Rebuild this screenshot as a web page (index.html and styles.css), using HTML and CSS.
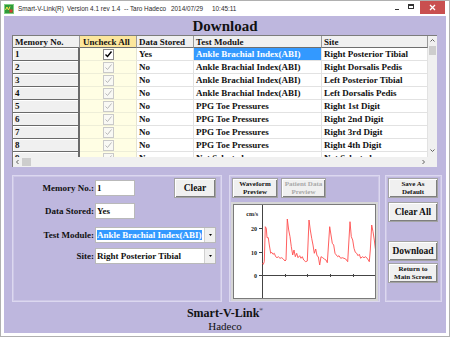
FILE: index.html
```html
<!DOCTYPE html>
<html>
<head>
<meta charset="utf-8">
<link rel="stylesheet" href="styles.css">
</head>
<body>
<div class="window">
  <div class="titlebar">
    <svg class="appicon" viewBox="0 0 10 10" width="10" height="10">
      <rect x="0" y="0" width="10" height="10" fill="#2f9a3a"/>
      <rect x="0.5" y="0.5" width="9" height="9" fill="none" stroke="#7fd07f" stroke-width="1"/>
      <polyline points="1.5,6 3,3 4.5,6 6,2.5" fill="none" stroke="#ffe04a" stroke-width="1"/>
      <rect x="5.5" y="5.5" width="3" height="3" fill="#d83b2e"/>
    </svg>
    <span class="tt t1">Smart-V-Link(R)</span>
    <span class="tt t2">Version 4.1 rev 1.4</span>
    <span class="tt t3">-- Taro Hadeco</span>
    <span class="tt t4">2014/07/29</span>
    <span class="tt t5">10:45:11</span>
    <div class="controls">
      <div class="ctl"><svg width="14" height="13" viewBox="0 0 14 13"><line x1="5" y1="8.5" x2="9" y2="8.5" stroke="#333" stroke-width="1"/></svg></div>
      <div class="ctl"><svg width="14" height="13" viewBox="0 0 14 13"><rect x="4.5" y="3.5" width="5" height="4" fill="none" stroke="#333" stroke-width="1"/><line x1="4.5" y1="4.5" x2="9.5" y2="4.5" stroke="#333"/></svg></div>
      <div class="ctl close"><svg width="25" height="13" viewBox="0 0 25 13"><path d="M10 4 L15 9 M15 4 L10 9" stroke="#fff" stroke-width="1.3"/></svg></div>
    </div>
  </div>

  <div class="client">
    <h1 class="heading">Download</h1>

    <div class="gridview">
      <div class="grid-main">
        <div class="table-wrap">
          <div class="row head">
            <div class="c hc">Memory No.</div>
            <div class="c hc hy">Uncheck All</div>
            <div class="c hc">Data Stored</div>
            <div class="c hc">Test Module</div>
            <div class="c hc">Site</div>
          </div>
          <div class="row">
            <div class="c rh">1</div>
            <div class="c uc"><span class="cb on"><svg viewBox="0 0 9 9" width="9" height="9"><polyline points="1.5,4.5 3.5,6.5 7.5,1.5" fill="none" stroke="#000" stroke-width="1.4"/></svg></span></div>
            <div class="c dc">Yes</div>
            <div class="c dc sel">Ankle Brachial Index(ABI)</div>
            <div class="c dc">Right Posterior Tibial</div>
          </div>
          <div class="row">
            <div class="c rh">2</div>
            <div class="c uc"><span class="cb"><svg viewBox="0 0 9 9" width="9" height="9"><polyline points="1.5,4.5 3.5,6.5 7.5,1.5" fill="none" stroke="#b8b8b8" stroke-width="1"/></svg></span></div>
            <div class="c dc">No</div>
            <div class="c dc">Ankle Brachial Index(ABI)</div>
            <div class="c dc">Right Dorsalis Pedis</div>
          </div>
          <div class="row">
            <div class="c rh">3</div>
            <div class="c uc"><span class="cb"><svg viewBox="0 0 9 9" width="9" height="9"><polyline points="1.5,4.5 3.5,6.5 7.5,1.5" fill="none" stroke="#b8b8b8" stroke-width="1"/></svg></span></div>
            <div class="c dc">No</div>
            <div class="c dc">Ankle Brachial Index(ABI)</div>
            <div class="c dc">Left Posterior Tibial</div>
          </div>
          <div class="row">
            <div class="c rh">4</div>
            <div class="c uc"><span class="cb"><svg viewBox="0 0 9 9" width="9" height="9"><polyline points="1.5,4.5 3.5,6.5 7.5,1.5" fill="none" stroke="#b8b8b8" stroke-width="1"/></svg></span></div>
            <div class="c dc">No</div>
            <div class="c dc">Ankle Brachial Index(ABI)</div>
            <div class="c dc">Left Dorsalis Pedis</div>
          </div>
          <div class="row">
            <div class="c rh">5</div>
            <div class="c uc"><span class="cb"><svg viewBox="0 0 9 9" width="9" height="9"><polyline points="1.5,4.5 3.5,6.5 7.5,1.5" fill="none" stroke="#b8b8b8" stroke-width="1"/></svg></span></div>
            <div class="c dc">No</div>
            <div class="c dc">PPG Toe Pressures</div>
            <div class="c dc">Right 1st Digit</div>
          </div>
          <div class="row">
            <div class="c rh">6</div>
            <div class="c uc"><span class="cb"><svg viewBox="0 0 9 9" width="9" height="9"><polyline points="1.5,4.5 3.5,6.5 7.5,1.5" fill="none" stroke="#b8b8b8" stroke-width="1"/></svg></span></div>
            <div class="c dc">No</div>
            <div class="c dc">PPG Toe Pressures</div>
            <div class="c dc">Right 2nd Digit</div>
          </div>
          <div class="row">
            <div class="c rh">7</div>
            <div class="c uc"><span class="cb"><svg viewBox="0 0 9 9" width="9" height="9"><polyline points="1.5,4.5 3.5,6.5 7.5,1.5" fill="none" stroke="#b8b8b8" stroke-width="1"/></svg></span></div>
            <div class="c dc">No</div>
            <div class="c dc">PPG Toe Pressures</div>
            <div class="c dc">Right 3rd Digit</div>
          </div>
          <div class="row">
            <div class="c rh">8</div>
            <div class="c uc"><span class="cb"><svg viewBox="0 0 9 9" width="9" height="9"><polyline points="1.5,4.5 3.5,6.5 7.5,1.5" fill="none" stroke="#b8b8b8" stroke-width="1"/></svg></span></div>
            <div class="c dc">No</div>
            <div class="c dc">PPG Toe Pressures</div>
            <div class="c dc">Right 4th Digit</div>
          </div>
          <div class="row">
            <div class="c rh">9</div>
            <div class="c uc"><span class="cb"><svg viewBox="0 0 9 9" width="9" height="9"><polyline points="1.5,4.5 3.5,6.5 7.5,1.5" fill="none" stroke="#b8b8b8" stroke-width="1"/></svg></span></div>
            <div class="c dc">No</div>
            <div class="c dc">Not Selected</div>
            <div class="c dc">Not Selected</div>
          </div>
        </div>
        <div class="hscroll">
          <div class="arr"><svg width="9" height="10" viewBox="0 0 9 10"><polyline points="5.5,3 3.5,5 5.5,7" fill="none" stroke="#606060" stroke-width="1"/></svg></div>
          <div class="hthumb"></div>
          <div class="sp"></div>
          <div class="arr"><svg width="9" height="10" viewBox="0 0 9 10"><polyline points="3.5,3 5.5,5 3.5,7" fill="none" stroke="#606060" stroke-width="1"/></svg></div>
        </div>
      </div>
      <div class="vscroll">
        <div class="varr"><svg width="9" height="9" viewBox="0 0 9 9"><polyline points="2.5,5.5 4.5,3.5 6.5,5.5" fill="none" stroke="#606060" stroke-width="1"/></svg></div>
        <div class="vthumb"></div>
        <div class="sp"></div>
        <div class="varr"><svg width="9" height="9" viewBox="0 0 9 9"><polyline points="2.5,3.5 4.5,5.5 6.5,3.5" fill="none" stroke="#606060" stroke-width="1"/></svg></div>
        <div class="corner"></div>
      </div>
    </div>

    <div class="panels">
      <div class="panel left">
        <div class="frow r1">
          <span class="lbl">Memory No.:</span>
          <span class="field f-short">1</span>
          <button class="btn b-clear">Clear</button>
        </div>
        <div class="frow r2">
          <span class="lbl">Data Stored:</span>
          <span class="field f-short">Yes</span>
        </div>
        <div class="frow r3">
          <span class="lbl">Test Module:</span>
          <span class="field combo"><span class="ctext"><span class="hl">Ankle Brachial Index(ABI)</span></span><span class="cbtn"><svg width="9" height="14" viewBox="0 0 9 14"><path d="M3 6 L6 6 L4.5 8 Z" fill="#000"/></svg></span></span>
        </div>
        <div class="frow r4">
          <span class="lbl">Site:</span>
          <span class="field combo"><span class="ctext">Right Posterior Tibial</span><span class="cbtn"><svg width="9" height="14" viewBox="0 0 9 14"><path d="M3 6 L6 6 L4.5 8 Z" fill="#000"/></svg></span></span>
        </div>
      </div>

      <div class="panel mid">
        <div class="btnrow">
          <button class="btn small w46">Waveform<br>Preview</button>
          <button class="btn small w45 dis">Patient Data<br>Preview</button>
        </div>
        <div class="chart">
          <div class="chart-in">
            <svg width="141" height="93" viewBox="-1 0 141 93">
              <line x1="27.5" y1="0" x2="27.5" y2="93" stroke="#444" stroke-width="1"/>
              <line x1="27" y1="70.5" x2="141" y2="70.5" stroke="#444" stroke-width="1"/>
              <line x1="24" y1="23.5" x2="27" y2="23.5" stroke="#444"/>
              <line x1="24" y1="47.5" x2="27" y2="47.5" stroke="#444"/>
              <line x1="24" y1="70.5" x2="27" y2="70.5" stroke="#444"/>
              <line x1="50.5" y1="69" x2="50.5" y2="72" stroke="#444"/>
              <line x1="72.5" y1="69" x2="72.5" y2="72" stroke="#444"/>
              <line x1="95.5" y1="69" x2="95.5" y2="72" stroke="#444"/>
              <line x1="118.5" y1="69" x2="118.5" y2="72" stroke="#444"/>
              <text x="23" y="11" class="ax" text-anchor="end">cm/s</text>
              <text x="22" y="25.5" class="ax" text-anchor="end">20</text>
              <text x="22" y="49.5" class="ax" text-anchor="end">10</text>
              <text x="22" y="72.5" class="ax" text-anchor="end">0</text>
              <polyline fill="none" stroke="#ff4d4d" stroke-width="0.9" stroke-linejoin="round" points="27.3,58.3 28.3,59.3 29.3,56.7 30.3,21.7 31.3,23.3 32,32.7 33.3,32.7 34.3,40 35.7,48.3 36.7,47.3 38,49.3 39.3,48.3 40.7,51.7 42,52.7 43.3,51.7 45,53.3 46.7,52.7 48.3,54 50,56 51,55 52.3,14 53.7,25 55,31.7 56.3,41.7 57.7,50 59,45 60.3,51.7 61.7,48.3 63,52.7 64.7,50.7 66,53.3 67.3,51.7 68.7,55 70.7,56.7 72.3,56 74,15 75.3,25 76.7,33.3 78,40 79.3,48.3 80.7,44 82,50.7 83.3,51.7 84.7,60 86,51.7 87.7,52.7 89.3,54 91,55 92.3,57.7 94.7,21.7 96,30 97.3,38.3 98.7,40 100,48.3 101.3,50 102.7,51.7 104,50.7 105.7,53.3 107.3,52.7 109,53.3 110.7,54 112.7,56.7 115,16.7 116.3,31.7 117.7,35 119,43.3 120.3,47.3 121.7,48.3 123,50.7 124.3,49.3 125.7,53.3 127.3,51.7 129,52.7 130.7,51.7 132.7,54 134.3,56.7 135.3,45 136.7,20 138,26.7 139.3,35 140.3,43.3 141,41.7"/>
            </svg>
          </div>
        </div>
      </div>

      <div class="panel right">
        <button class="btn small w50">Save As<br>Default</button>
        <button class="btn w50 big mt4">Clear All</button>
        <button class="btn w50 big mt19">Download</button>
        <button class="btn small w50 mt2">Return to<br>Main Screen</button>
      </div>
    </div>

    <div class="footer">
      <div class="brand">Smart-V-Link<sup>®</sup></div>
      <div class="company">Hadeco</div>
    </div>
  </div>
</div>
</body>
</html>
```

FILE: styles.css
```css
* { box-sizing: border-box; }
html, body { margin: 0; padding: 0; }
body {
  width: 450px;
  height: 337px;
  overflow: hidden;
  background: #fff;
  font-family: "Liberation Serif", "Times New Roman", serif;
  color: #111;
}

.window {
  width: 450px;
  height: 337px;
  border: 1px solid #b0b0b0;
  background: #fff;
  display: flex;
  flex-direction: column;
}

/* title bar */
.titlebar {
  height: 15px;
  flex: none;
  display: flex;
  align-items: center;
  font-family: "Liberation Sans", Arial, sans-serif;
  font-size: 6.4px;
  color: #2a2a2a;
  white-space: nowrap;
}
.appicon { margin: 0 4px 0 3px; flex: none; }
.tt { display: inline-block; }
.t1 { width: 49px; }
.t2 { width: 57px; }
.t3 { width: 47px; }
.t4 { width: 41px; }
.t5 { width: 30px; }
.controls {
  margin-left: auto;
  margin-right: 4px;
  display: flex;
  align-self: flex-start;
}
.ctl { width: 14px; height: 13px; }
.ctl svg { display: block; }
.ctl.close { width: 25px; margin-left: 2px; background: #c94f4f; }

/* client area */
.client {
  flex: 1;
  margin: 0 3px 3px;
  background: #beb7de;
  display: flex;
  flex-direction: column;
}
.heading {
  margin: 0;
  height: 19px;
  line-height: 20px;
  text-align: center;
  font-size: 15px;
  font-weight: bold;
  color: #111;
}

/* grid */
.gridview {
  margin: 0 9px 0 8px;
  height: 132px;
  display: flex;
  border-top: 1px solid #7c7c7c;
  border-left: 1px solid #7c7c7c;
  background: #fff;
}
.grid-main { width: 415px; display: flex; flex-direction: column; }
.table-wrap { height: 121px; overflow: hidden; background: #fff; }
.row {
  display: grid;
  grid-template-columns: 67px 57px 57px 128px 106px;
  height: 13px;
}
.row.head { height: 12px; }
.c {
  display: flex;
  align-items: center;
  overflow: hidden;
  white-space: nowrap;
  font-size: 9px;
  font-weight: bold;
  padding-left: 2px;
}
.hc {
  background: #f0f0f0;
  border-right: 1px solid #9a9a9a;
  border-bottom: 1px solid #6e6e6e;
  padding-left: 2px;
}
.hc.hy { background: #fce69c; padding-left: 3px; }
.rh {
  background: #f0f0f0;
  border-right: 2px solid #6a6a6a;
  border-bottom: 1px solid #6a6a6a;
  box-shadow: inset 1px 1px 0 #ffffff;
}
.uc {
  background: #fffee4;
  border-bottom: 1px solid #eeeed8;
  border-right: 1px solid #e4e4d4;
  padding-left: 23px;
}
.cb {
  width: 11px;
  height: 11px;
  border: 1px solid #c9c9c9;
  background: #f9f9f4;
  display: flex;
  align-items: center;
  justify-content: center;
}
.cb svg { display: block; }
.cb.on { border-color: #8a8a8a; background: #fff; }
.dc {
  background: #fff;
  border-right: 1px solid #e2e2e2;
  border-bottom: 1px solid #e2e2e2;
}
.dc.sel { background: #3399ff; color: #fff; }

.hscroll {
  height: 10px;
  display: flex;
  background: #f0f0f0;
}
.arr { width: 9px; height: 10px; }
.arr svg, .varr svg { display: block; }
.hthumb { width: 9px; height: 8px; margin-top: 1px; background: #cdcdcd; }
.sp { flex: 1; }
.vscroll {
  width: 9px;
  display: flex;
  flex-direction: column;
  background: #f0f0f0;
}
.varr { height: 9px; }
.vthumb { height: 9px; margin: 1px 1px 0; background: #cdcdcd; }
.corner { height: 10px; background: #f0f0f0; margin-top: 2px; }

/* panels */
.panels {
  display: flex;
  margin: 8px 4px 0 8px;
  height: 127px;
}
.panel {
  border: 1px solid #dcd8f0;
  box-shadow: inset 0 0 0 1px #cdc7e6;
}
.left { width: 210px; padding: 2px 5px 0 0; }
.mid { width: 151px; margin-left: 7px; padding: 2px 0 0 2px; }
.right {
  width: 57px;
  margin-left: 5px;
  padding: 2px 0 0 2px;
  display: flex;
  flex-direction: column;
  align-items: flex-start;
}

.frow { display: flex; align-items: center; }
.r1 { height: 20px; }
.r2 { margin-top: 5px; }
.r3 { margin-top: 8px; }
.r4 { margin-top: 5px; }
.lbl {
  width: 81px;
  text-align: right;
  font-size: 9px;
  font-weight: bold;
}
.field {
  margin-left: 1px;
  height: 16px;
  background: #fff;
  border: 1px solid #b9b9b9;
  font-size: 9px;
  font-weight: bold;
  display: flex;
  align-items: center;
  padding-left: 1px;
  white-space: nowrap;
  overflow: hidden;
}
.f-short { width: 40px; }
.combo { width: 121px; padding: 0; }
.ctext { flex: 1; padding-left: 1px; overflow: hidden; }
.hl { background: #3399ff; color: #fff; padding: 1px 0; }
.cbtn {
  width: 11px;
  height: 14px;
  background: #f0f0f0;
  border-left: 1px solid #d0d0d0;
  display: flex;
  justify-content: center;
}
.cbtn svg { display: block; }

.btn {
  font-family: "Liberation Serif", "Times New Roman", serif;
  font-weight: bold;
  font-size: 9px;
  color: #111;
  background: #f0f0f0;
  border: 1px solid #a3a3a3;
  box-shadow: inset 1px 1px 0 #ffffff, inset -1px -1px 0 #7e7e7e;
  padding: 0;
  height: 20px;
  line-height: 8px;
  text-align: center;
}
.b-clear { margin-left: auto; width: 42px; font-size: 9.5px; }
.btn.small { font-size: 7px; line-height: 8px; }
.btn.big { font-size: 9.5px; }
.btn.dis { color: #a8a8a8; }
.w46 { width: 46px; }
.w45 { width: 45px; }
.w50 { width: 50px; }
.mt4 { margin-top: 4px; }
.mt19 { margin-top: 19px; }
.mt2 { margin-top: 2px; }
.btnrow { display: flex; gap: 3px; }

.chart {
  margin: 4px 0 0 -1px;
  width: 147px;
  height: 99px;
  border: 2px solid #d6d6d6;
  background: #e8e8e8;
}
.chart-in {
  width: 143px;
  height: 95px;
  border: 1px solid #7a7a7a;
  background: #fff;
}
.chart-in svg { display: block; }
.ax {
  font-family: "Liberation Serif", "Times New Roman", serif;
  font-size: 6px;
  font-weight: bold;
  fill: #222;
}

/* footer */
.footer {
  text-align: center;
  padding-top: 5px;
  color: #111;
}
.brand {
  font-size: 12px;
  font-weight: bold;
  line-height: 12px;
}
.brand sup { font-size: 5px; vertical-align: top; line-height: 5px; }
.company { font-size: 11px; line-height: 13px; margin-top: 1px; }
```
